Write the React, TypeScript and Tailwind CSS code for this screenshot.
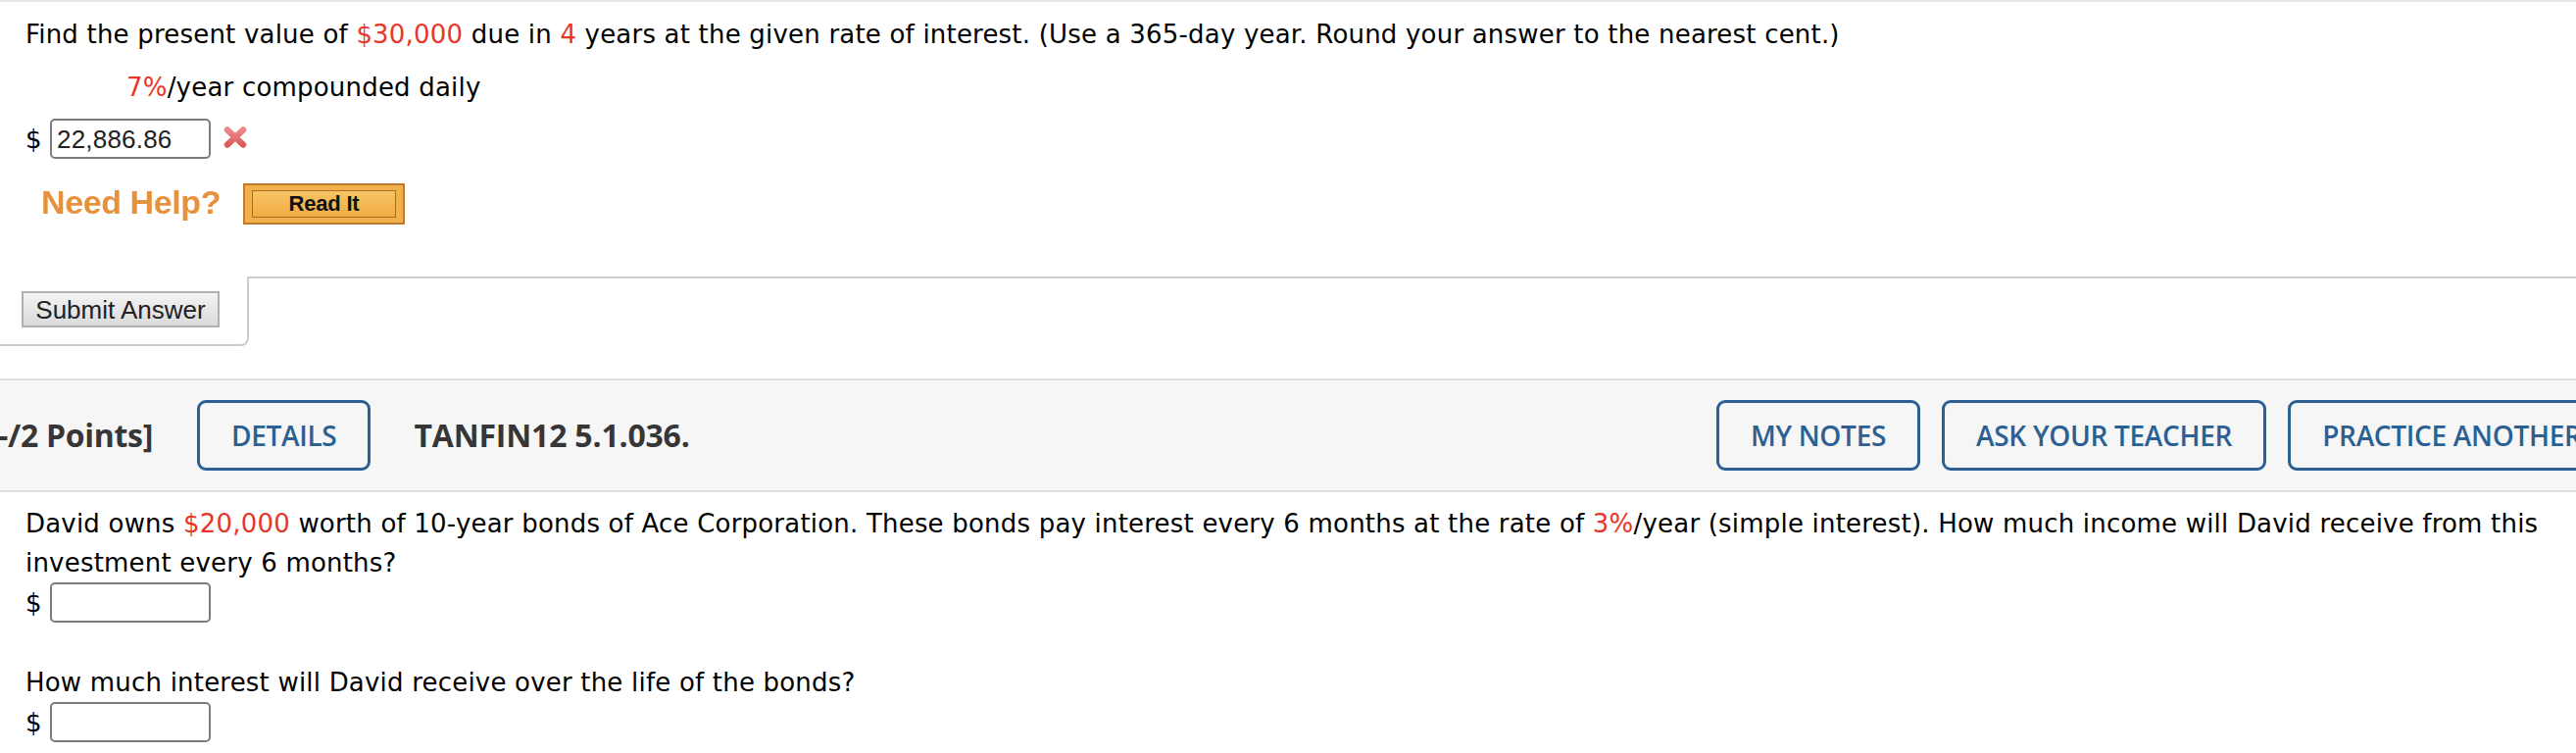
import React from "react";

const V = "font-['DejaVu_Sans',Verdana,sans-serif] tracking-[0.2px]";
const A = "font-['Liberation_Sans',Arial,sans-serif]";
const O = "font-['Open_Sans',sans-serif]";
const RED = "text-[#e8362a]";

function OutlineBtn({ children, className = "" }: { children: React.ReactNode; className?: string }) {
  return (
    <div
      className={`${O} shrink-0 h-[72px] px-[32px] border-[3px] border-[#2c6093] rounded-[9px] flex items-center whitespace-nowrap text-[#2c6093] text-[28px] font-semibold tracking-[-0.3px] ${className}`}
    >
      {children}
    </div>
  );
}

function CrossIcon() {
  return (
    <svg width="26" height="24" viewBox="0 0 26 24" className="mt-[7px] ml-[12px]">
      <defs>
        <linearGradient id="xg" x1="0" y1="0" x2="0" y2="1">
          <stop offset="0" stopColor="#ec8a8a" />
          <stop offset="1" stopColor="#dc5a5a" />
        </linearGradient>
      </defs>
      <path d="M5 4.5 L21 19.5 M21 4.5 L5 19.5" stroke="url(#xg)" strokeWidth="6.5" strokeLinecap="round" fill="none" />
    </svg>
  );
}

function DollarInput({ value }: { value?: string }) {
  return (
    <div className="flex items-center">
      <span className={`${V} w-[25px] text-[26px] text-black leading-[40px]`}>$</span>
      <div
        className={`${A} w-[164px] h-[41px] border-2 border-[#7d7d7d] rounded-[5px] bg-white flex items-center pl-[5px] text-[26px] text-[#222] leading-[30px]`}
      >
        {value}
      </div>
    </div>
  );
}

export default function App() {
  return (
    <div className="w-[2628px] h-[768px] bg-white overflow-hidden">
      {/* Question 1 */}
      <div className="border-t-2 border-[#e4e4e4]">
        <div className={`${V} px-[26px] pt-[13px] text-[26px] leading-[40px] text-black`}>
          <div className="whitespace-nowrap">
            Find the present value of <span className={RED}>$30,000</span> due in <span className={RED}>4</span> years at the
            given rate of interest. (Use a 365-day year. Round your answer to the nearest cent.)
          </div>
          <div className="mt-[14px] pl-[103px]">
            <span className={RED}>7%</span>/year compounded daily
          </div>
          <div className="mt-[12px] flex items-start">
            <DollarInput value="22,886.86" />
            <CrossIcon />
          </div>
          <div className="mt-[24px] flex items-center">
            <div className="w-[222px] pl-[16px]">
              <span className={`${A} font-bold text-[34px] leading-[40px] text-[#e6913c] blur-[0.4px] tracking-[-0.4px]`}>
                Need Help?
              </span>
            </div>
            <div className="w-[165px] h-[42px] border-2 border-[#c07c30] bg-[#f2b14d] px-[7px] py-[5px]">
              <div className="h-full border border-[#a96c25] bg-gradient-to-b from-[#f7c363] to-[#f0ac44] flex items-center justify-center">
                <span className={`${A} font-bold text-[22px] leading-[24px] text-[#111] tracking-[-0.2px]`}>Read It</span>
              </div>
            </div>
          </div>
        </div>

        {/* Submit area */}
        <div className="mt-[53px] flex">
          <div className="w-[254px] shrink-0 border-r-2 border-b-2 border-[#cccccc] rounded-br-[8px] pl-[22px] pt-[15px] pb-[17px]">
            <div
              className={`${A} w-[202px] h-[37px] border-2 border-[#b0b0b0] bg-gradient-to-b from-[#f4f4f4] to-[#dadada] flex items-center justify-center text-[26px] leading-[30px] text-[#222]`}
            >
              Submit Answer
            </div>
          </div>
          <div className="flex-1 border-t-2 border-[#cccccc]" />
        </div>
      </div>

      {/* Header of question 2 */}
      <div className="mt-[33px] border-y-2 border-[#dddddd] bg-[#f6f6f6] h-[116px] overflow-hidden flex items-center">
        <div className="w-[1751px] shrink-0 flex items-center">
          <span className={`${O} font-bold text-[32px] text-[#363636] whitespace-nowrap -ml-[2px] tracking-[-0.3px]`}>-/2 Points]</span>
          <OutlineBtn className="ml-[45px]">DETAILS</OutlineBtn>
          <span className={`${O} ml-[44px] font-bold text-[32px] text-[#363636] whitespace-nowrap tracking-[-0.2px]`}>
            TANFIN12 5.1.036.
          </span>
        </div>
        <div className="flex items-center gap-[22px] shrink-0">
          <OutlineBtn>MY NOTES</OutlineBtn>
          <OutlineBtn>ASK YOUR TEACHER</OutlineBtn>
          <OutlineBtn>PRACTICE ANOTHER</OutlineBtn>
        </div>
      </div>

      {/* Question 2 */}
      <div className={`${V} px-[26px] pt-[12px] text-[26px] leading-[40px] text-black`}>
        <div>
          David owns <span className={RED}>$20,000</span> worth of 10-year bonds of Ace Corporation. These bonds pay interest
          every 6 months at the rate of <span className={RED}>3%</span>/year (simple interest). How much income will David
          receive from this investment every 6 months?
        </div>
        <DollarInput />
        <div className="mt-[41px]">How much interest will David receive over the life of the bonds?</div>
        <DollarInput />
      </div>
    </div>
  );
}
